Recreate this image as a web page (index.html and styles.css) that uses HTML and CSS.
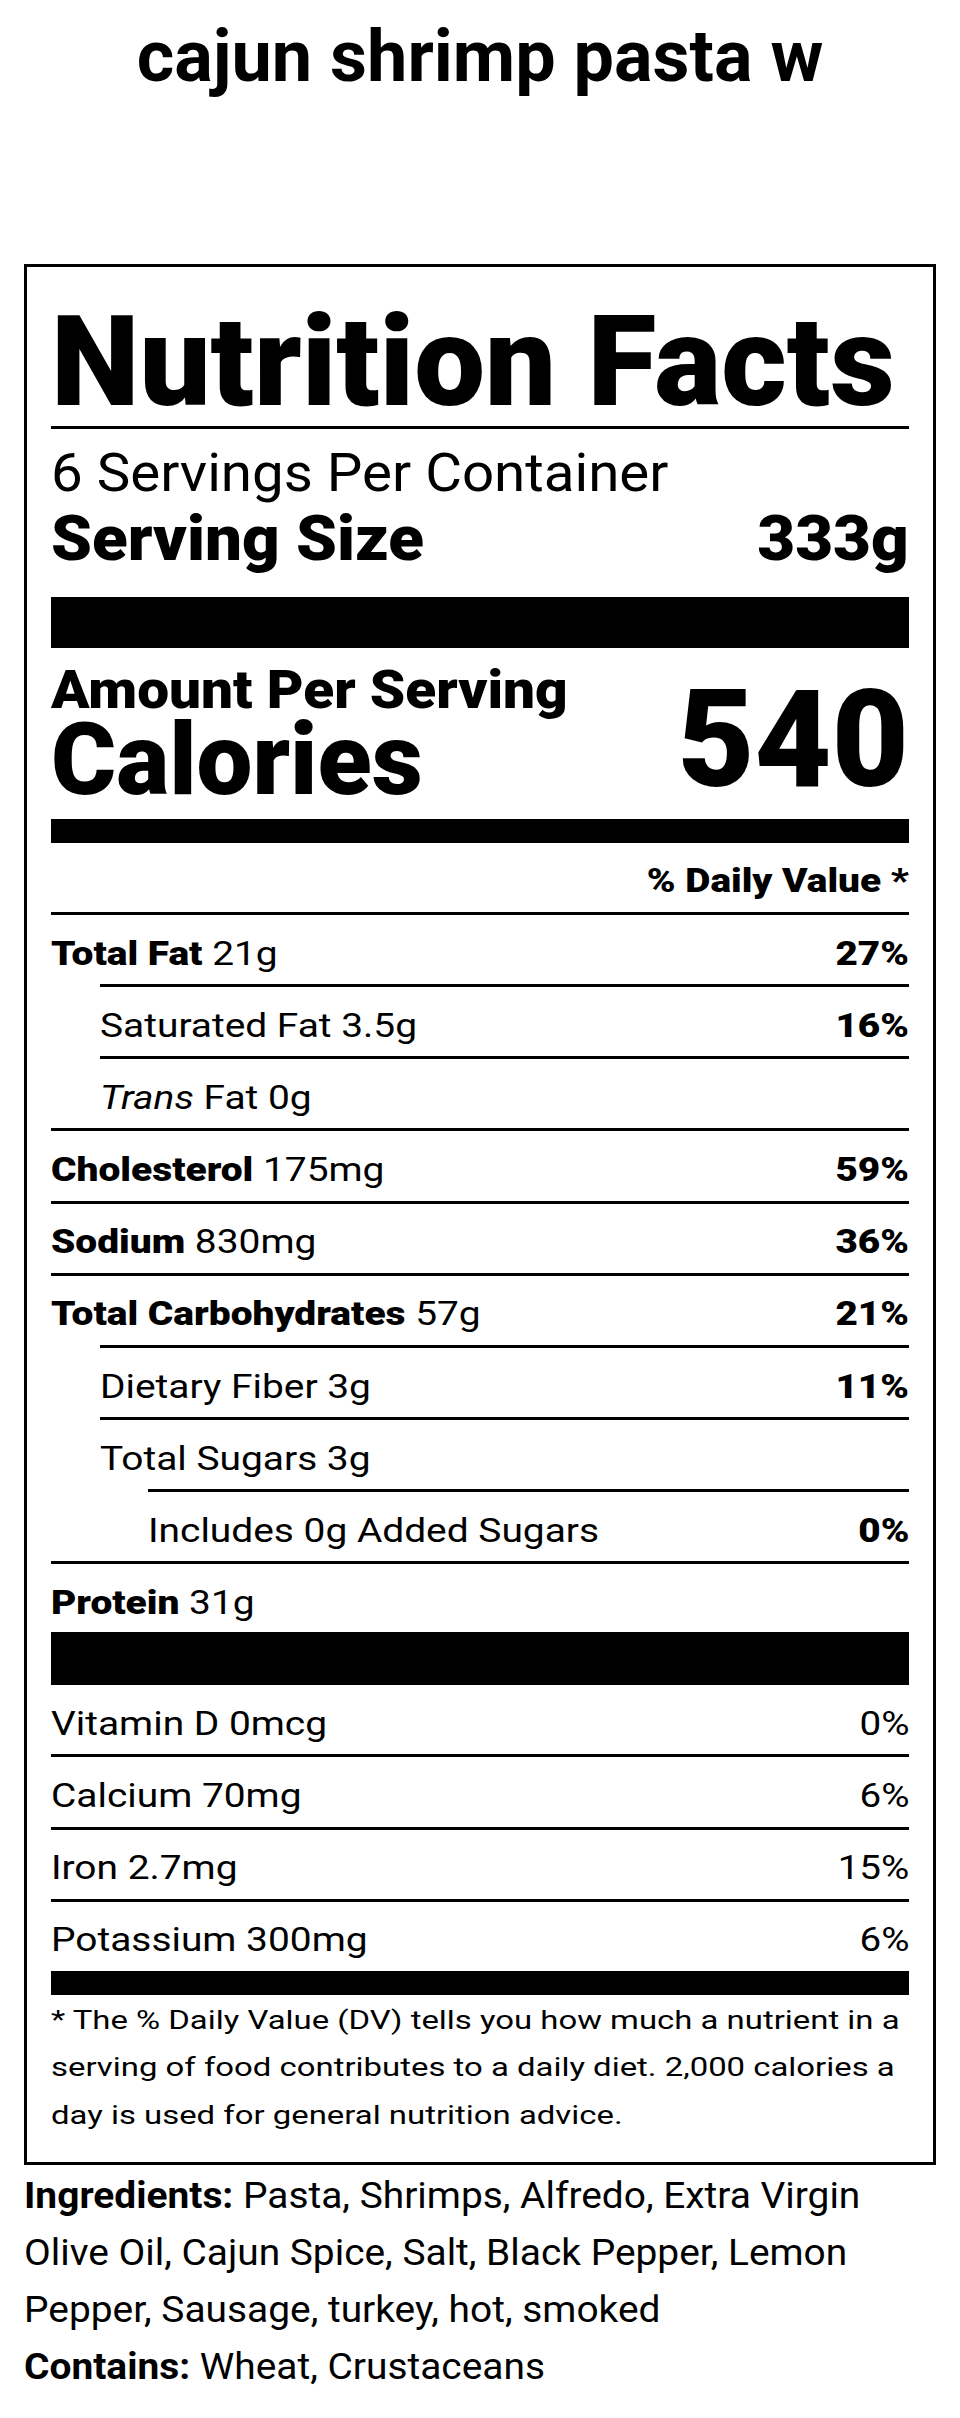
FILE: index.html
```html
<!DOCTYPE html>
<html lang="en">
<head>
<meta charset="utf-8">
<title>cajun shrimp pasta w - Nutrition Facts</title>
<link rel="stylesheet" href="styles.css">
</head>
<body>
<h1 class="title">cajun shrimp pasta w</h1>
<section class="label">
  <div class="nf">Nutrition Facts</div>
  <div class="servings"><span class="sx">6 Servings Per Container</span></div>
  <div class="serving-size"><span class="sx">Serving Size</span><span class="sx sx-r">333g</span></div>
  <div class="bar bar-1"></div>
  <div class="calories">
    <div class="cal-left">
      <div class="amount"><span class="sx">Amount Per Serving</span></div>
      <div class="cal-label"><span class="sx">Calories</span></div>
    </div>
    <div class="cal-value"><span class="sx sx-r">540</span></div>
  </div>
  <div class="bar bar-2"></div>
  <div class="dv-head"><span class="sx sx-r">% Daily Value *</span></div>
  <div class="row"><span class="sx"><b>Total Fat</b> 21g</span><b class="sx sx-r">27%</b></div>
  <div class="row i1"><span class="sx">Saturated Fat 3.5g</span><b class="sx sx-r">16%</b></div>
  <div class="row i1"><span class="sx"><i>Trans</i> Fat 0g</span></div>
  <div class="row"><span class="sx"><b>Cholesterol</b> 175mg</span><b class="sx sx-r">59%</b></div>
  <div class="row"><span class="sx"><b>Sodium</b> 830mg</span><b class="sx sx-r">36%</b></div>
  <div class="row"><span class="sx"><b>Total Carbohydrates</b> 57g</span><b class="sx sx-r">21%</b></div>
  <div class="row i1"><span class="sx">Dietary Fiber 3g</span><b class="sx sx-r">11%</b></div>
  <div class="row i1"><span class="sx">Total Sugars 3g</span></div>
  <div class="row i2"><span class="sx">Includes 0g Added Sugars</span><b class="sx sx-r">0%</b></div>
  <div class="row protein"><span class="sx"><b>Protein</b> 31g</span></div>
  <div class="bar bar-3"></div>
  <div class="row nb"><span class="sx">Vitamin D 0mcg</span><span class="sx sx-r">0%</span></div>
  <div class="row"><span class="sx">Calcium 70mg</span><span class="sx sx-r">6%</span></div>
  <div class="row"><span class="sx">Iron 2.7mg</span><span class="sx sx-r">15%</span></div>
  <div class="row"><span class="sx">Potassium 300mg</span><span class="sx sx-r">6%</span></div>
  <div class="bar bar-4"></div>
  <p class="footnote">* The % Daily Value (DV) tells you how much a nutrient in a serving of food contributes to a daily diet. 2,000 calories a day is used for general nutrition advice.</p>
</section>
<p class="ingredients"><b>Ingredients:</b> Pasta, Shrimps, Alfredo, Extra Virgin Olive Oil, Cajun Spice, Salt, Black Pepper, Lemon Pepper, Sausage, turkey, hot, smoked</p>
<p class="ingredients contains"><b>Contains:</b> Wheat, Crustaceans</p>
</body>
</html>
```

FILE: styles.css
```css
* { box-sizing: border-box; }
html, body { background: #fff; }
body {
  margin: 0;
  padding: 0 24px 1px;
  font-family: Roboto, "Liberation Sans", sans-serif;
  color: #000;
}
b { font-weight: 900; }

/* horizontally stretched text, as in the printed label */
.sx {
  display: inline-block;
  transform-origin: left center;
}
.sx-r { transform-origin: right center; }

.title {
  margin: 21.4px 0 170.6px;
  font-size: 72px;
  line-height: 1;
  font-weight: 700;
  text-align: center;
}
.label {
  border: 3px solid #000;
  padding: 32.4px 24px 22.3px;
}
.nf {
  font-size: 126px;
  line-height: 1;
  font-weight: 900;
  white-space: nowrap;
  border-bottom: 3px solid #000;
  padding-bottom: 0.6px;
}
.servings {
  margin-top: 17.9px;
  font-size: 53px;
  line-height: 1;
}
.servings .sx { transform: scaleX(1.065); }
.serving-size {
  display: flex;
  justify-content: space-between;
  margin-top: 7.1px;
  font-size: 63px;
  line-height: 1;
  font-weight: 900;
}
.serving-size .sx { transform: scaleX(1.04); }
.bar { background: #000; }
.bar-1 { height: 51px; margin-top: 27px; }
.calories {
  display: flex;
  justify-content: space-between;
  align-items: flex-start;
}
.cal-left { padding-top: 21.7px; }
.amount { font-size: 53px; line-height: 40px; font-weight: 900; }
.amount .sx { transform: scaleX(1.07); }
.cal-label { margin-top: 10.5px; font-size: 101px; line-height: 80px; font-weight: 900; }
.cal-label .sx { transform: scaleX(0.985); }
.cal-value { margin-top: 25px; font-size: 135px; line-height: 1; font-weight: 900; }
.cal-value .sx { transform: scaleX(0.985); }
.bar-2 { height: 24px; margin-top: 11px; }
.dv-head {
  margin-top: 21.2px;
  padding-bottom: 14.2px;
  text-align: right;
  font-size: 33.6px;
  line-height: 1;
  font-weight: 900;
}
.dv-head .sx { transform: scaleX(1.155); }
.row {
  display: flex;
  justify-content: space-between;
  border-top: 3px solid #000;
  padding: 21.7px 0 13.9px;
  font-size: 33.6px;
  line-height: 33.6px;
  white-space: nowrap;
}
.row .sx { transform: scaleX(1.158); }
.row .sx-r { transform: scaleX(1.15); }
.row.i1 { margin-left: 48.5px; }
.row.i2 { margin-left: 97px; }
.row.nb { border-top: 0; }
.row.protein { padding-bottom: 12.2px; }
.bar-3 { height: 53.3px; }
.bar-4 { height: 24px; }
.footnote {
  width: 678px;
  margin: 2px 0 0;
  font-size: 26px;
  line-height: 47.5px;
  transform: scaleX(1.265);
  transform-origin: left top;
}
.ingredients {
  width: 844px;
  margin: 3.4px 0 0;
  font-size: 36px;
  line-height: 57px;
  transform: scaleX(1.08);
  transform-origin: left top;
}
.ingredients b { font-weight: 700; }
.contains { margin-top: 0; }
```
